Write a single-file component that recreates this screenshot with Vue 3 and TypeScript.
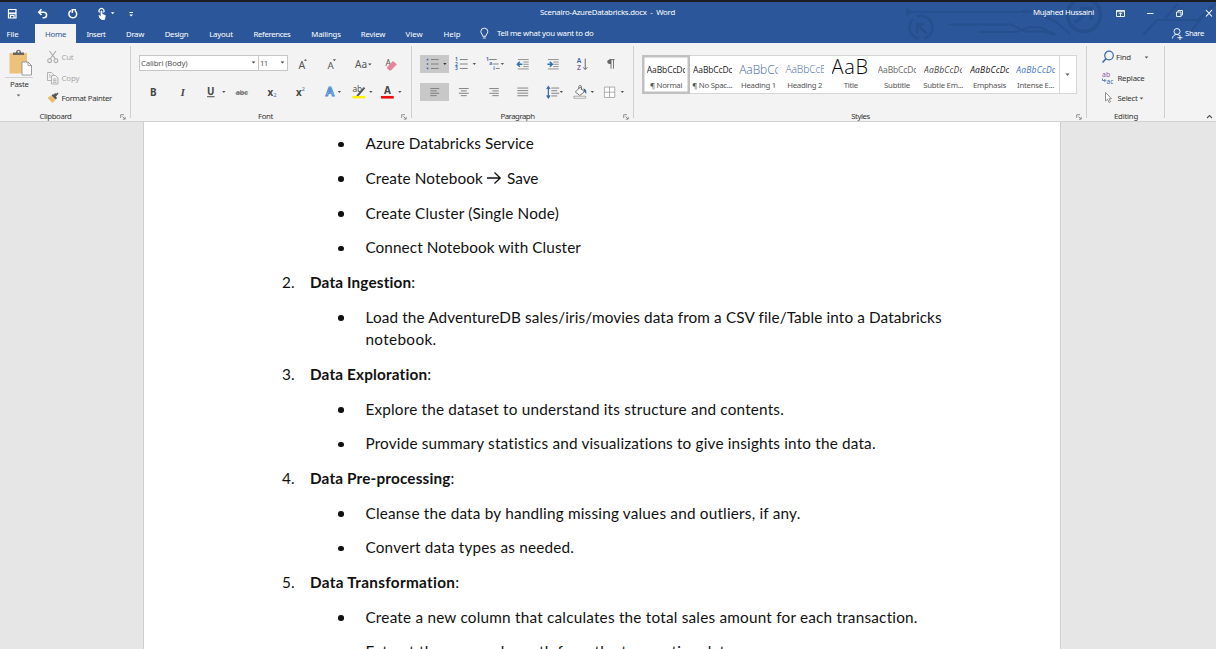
<script setup lang="ts">
interface Tab { label: string; cell: number; text: number }
interface StyleItem { preview: string; label: string; kind: string; pw: number; lw: number }
interface Para { kind: 'item' | 'head'; num?: string; lines: { text: string; w: number }[] }

// Spreads the letters of a label so that it takes the given width.
const vFit = {
  mounted(el: HTMLElement, binding: { value: number }) {
    const natural = el.getBoundingClientRect().width
    const count = (el.textContent ?? '').trim().length
    if (count > 0) el.style.letterSpacing = `${(binding.value - natural) / count}px`
  },
}

const tabs: Tab[] = [
  { label: 'Insert', cell: 40, text: 19 },
  { label: 'Draw', cell: 38, text: 18 },
  { label: 'Design', cell: 45, text: 23.5 },
  { label: 'Layout', cell: 44, text: 23.5 },
  { label: 'References', cell: 58, text: 37 },
  { label: 'Mailings', cell: 50, text: 29.5 },
  { label: 'Review', cell: 44, text: 24.5 },
  { label: 'View', cell: 38, text: 17 },
  { label: 'Help', cell: 38, text: 17 },
]

const styles: StyleItem[] = [
  { preview: 'AaBbCcDc', label: '¶ Normal', kind: 'normal', pw: 39.5, lw: 32 },
  { preview: 'AaBbCcDc', label: '¶ No Spac...', kind: 'normal', pw: 39.5, lw: 40 },
  { preview: 'AaBbCc', label: 'Heading 1', kind: 'h1', pw: 41, lw: 35 },
  { preview: 'AaBbCcE', label: 'Heading 2', kind: 'h2', pw: 40.5, lw: 35 },
  { preview: 'AaB', label: 'Title', kind: 'title', pw: 37, lw: 14 },
  { preview: 'AaBbCcDc', label: 'Subtitle', kind: 'sub', pw: 39.5, lw: 26 },
  { preview: 'AaBbCcDc', label: 'Subtle Em...', kind: 'subtle', pw: 39.5, lw: 40 },
  { preview: 'AaBbCcDc', label: 'Emphasis', kind: 'emph', pw: 39.5, lw: 33 },
  { preview: 'AaBbCcDc', label: 'Intense E...', kind: 'intense', pw: 39.5, lw: 37 },
]

const item = (...lines: [string, number][]): Para => ({ kind: 'item', lines: lines.map(([text, w]) => ({ text, w })) })
const head = (num: string, text: string, w: number): Para => ({ kind: 'head', num, lines: [{ text, w }] })

const paras: Para[] = [
  item(['Azure Databricks Service', 168.5]),
  { kind: 'item', lines: [{ text: 'Create Notebook', w: 117.5 }, { text: 'Save', w: 31.5 }] },
  item(['Create Cluster (Single Node)', 193.5]),
  item(['Connect Notebook with Cluster', 215.5]),
  head('2.', 'Data Ingestion', 101.5),
  item(['Load the AdventureDB sales/iris/movies data from a CSV file/Table into a Databricks', 576], ['notebook.', 71]),
  head('3.', 'Data Exploration', 117.5),
  item(['Explore the dataset to understand its structure and contents.', 418.5]),
  item(['Provide summary statistics and visualizations to give insights into the data.', 511]),
  head('4.', 'Data Pre-processing', 140.5),
  item(['Cleanse the data by handling missing values and outliers, if any.', 435]),
  item(['Convert data types as needed.', 208.5]),
  head('5.', 'Data Transformation', 145.5),
  item(['Create a new column that calculates the total sales amount for each transaction.', 552.5]),
  item(['Extract the year and month from the transaction date.', 372]),
]
</script>

<template>
  <div class="app">
    <header class="top">
      <svg class="circuit" width="320" height="41" viewBox="896 2 320 41" fill="none" stroke="#244a87" stroke-width="2">
        <path d="M908 12h120M907 9l5 3-5 3z" stroke-width="1.500" />
        <path d="M949 24.500h62l14 7h20l8 3M978 32h38l14-5 12 1 14 7M1022 11l14 1 20 10 14 12" />
        <circle cx="921" cy="27.500" r="11.500" stroke-width="2.500" stroke-dasharray="25 5" stroke-dashoffset="10" />
        <path d="M917 34v-10h8M918 25l9 9" stroke-width="2.500" />
        <circle cx="1084" cy="15" r="16.500" stroke-width="3.500" />
        <path d="M1080 8.500h11v11M1090 9.500l-15 13" stroke-width="3.500" />
        <path d="M1143 35l14-15h41l18-17M1165 19l12-15M1188 35l24-30" />
      </svg>
      <div class="titlebar">
        <svg class="quick" width="150" height="20" viewBox="0 0 150 20" fill="none" stroke="#fff" stroke-width="1.200">
          <path d="M8.500 6.500h7.500v8.500h-7.500z" /><path d="M8.500 10.300h7.500" stroke-width="1.700" /><path d="M10.500 15v-2.700h3.500v2.700" />
          <path d="M41.500 6.300l-2.800 2.900 2.800 2.800M39 9.200h4.800a2.800 2.800 0 0 1 0 5.600h-1.200" stroke-width="1.500" />
          <path d="M70.800 7.600a3.900 3.900 0 1 0 4.300.2M72.300 10V6.800h3.700" stroke-width="1.500" />
          <path d="M99.500 9.500a2.500 2.500 0 1 1 4 0" />
          <path d="M101 14.500l-2-2M101 8v6l-1.800-1.400.6 2.400 2 1.500h2.700l.8-4-3.300-1.200V8z" fill="#fff" stroke-width=".8" />
          <path d="M110.900 9.200h3.600l-1.800 2zM129.300 11.400h3.800l-1.900 2z" fill="#fff" stroke="none" /><path d="M129.500 9.500h3.500" stroke-width=".9" />
        </svg>
        <div class="doctitle"><span v-fit="135">Scenairo-AzureDatabricks.docx &nbsp;-&nbsp; Word</span></div>
        <div class="user"><span v-fit="61">Mujahed Hussaini</span></div>
        <svg class="winctl" width="104" height="20" viewBox="0 0 104 20" fill="none" stroke="#fff" stroke-width=".9">
          <path d="M4.500 7.500h8v6h-8zM4.500 8.700h8M8.500 13v-3M7 11.200l1.500-1.500 1.500 1.500" />
          <path d="M35 10.500h6.500" />
          <path d="M64.500 9h4.500v4.500h-4.500zM66 9v-1.500h4.500v4.500h-1.500" />
          <path d="M94 7l6 6.500M100 7l-6 6.500" stroke-width="1.100" />
        </svg>
      </div>
      <nav class="tabs">
        <span class="tab file"><span v-fit="12">File</span></span>
        <span class="tab home"><span v-fit="21">Home</span></span>
        <span v-for="t in tabs" :key="t.label" class="tab" :style="{ width: t.cell + 'px' }"><span v-fit="t.text">{{ t.label }}</span></span>
        <svg class="bulb" width="26" height="19" viewBox="0 0 26 19" fill="none" stroke="#fff" stroke-width=".9">
          <path d="M11.800 12.300c0-2-2-2.500-2-4.700a3.500 3.500 0 0 1 7 0c0 2.200-2 2.700-2 4.700zM11.800 14h3" />
        </svg>
        <span class="tell" v-fit="96.5">Tell me what you want to do</span>
        <span class="share">
          <svg width="13" height="13" viewBox="0 0 13 13" fill="none" stroke="#fff" stroke-width=".9"><circle cx="6" cy="4.500" r="3" /><path d="M1.500 11.500c0-2.500 2-4 4-4s2.800.6 3.300 1.500M6.500 10.700h5M9 8.200v5" /></svg>
          <span v-fit="19">Share</span>
        </span>
      </nav>
    </header>

    <section class="ribbon">
      <div class="group clipboard">
        <div class="main">
          <div class="paste">
            <svg width="30" height="27" viewBox="0 0 30 27">
              <path d="M5.500 4h17.500v20.500h-17.500z" fill="#ecc27b" />
              <path d="M9 6V3.400h3C12-.2 17-.2 17 3.400h3V6z" fill="#666" /><circle cx="14.500" cy="2.800" r="1" fill="#f3f3f3" />
              <path d="M18 13h6l3.500 3.500v9.500h-9.500z" fill="#fff" stroke="#929292" stroke-width=".9" /><path d="M24 13v3.500h3.500" fill="none" stroke="#929292" stroke-width=".8" />
            </svg>
            <i class="rule"></i>
            <span v-fit="18.500">Paste</span>
            <svg class="caret" width="5" height="3" viewBox="0 0 5 3"><path d="M.7.5h3.600L2.500 2.600z" fill="#666" /></svg>
          </div>
          <div class="clipcol">
            <div class="cliprow dim">
              <svg width="14" height="14" viewBox="0 0 14 14" fill="none" stroke="#a9a9a9" stroke-width="1.100"><path d="M3.500 1l6 8M10 1l-6 8" /><circle cx="3.600" cy="10.700" r="1.900" /><circle cx="9.900" cy="10.700" r="1.900" /></svg>
              <span v-fit="12">Cut</span>
            </div>
            <div class="cliprow dim">
              <svg width="14" height="14" viewBox="0 0 14 14" fill="#f3f3f3" stroke="#aaa" stroke-width=".9"><path d="M1.500 1.500h4l2 2v6h-6z" /><path d="M5.500 4.500h4l2.500 2.500v6H5.500zM7 8h3.500M7 9.700h3.500M7 11.300h3.500M3 4h1.500M3 6h1.500" /></svg>
              <span v-fit="18">Copy</span>
            </div>
            <div class="cliprow">
              <svg width="14" height="14" viewBox="0 0 14 14"><path d="M1.500 7L5 4.500l4.500 4.500L6.500 12z" fill="#ecb96a" /><path d="M5.500 4.500l1.700-1.500 4 4-1.700 1.600zM8 3.500l1-1.500 1.200.8L11.500 1.500l1 1-2 2.500-1 .9z" fill="#555" /></svg>
              <span v-fit="50.500">Format Painter</span>
            </div>
          </div>
        </div>
        <div class="caption"><span v-fit="32">Clipboard</span><svg class="launch" width="6" height="6" viewBox="0 0 6 6" fill="none" stroke="#777" stroke-width=".8"><path d="M.7 4V.7H4M2.500 2.500l2.300 2.300M5.200 2.800v2.400H2.800" /></svg></div>
      </div>

      <div class="group font">
        <div class="rowline">
          <div class="combo name"><span v-fit="46.500">Calibri (Body)</span><svg width="5" height="3" viewBox="0 0 5 3"><path d="M.6.4h3.800L2.500 2.600z" fill="#444" /></svg></div>
          <div class="combo size"><span v-fit="7.500">11</span><svg width="5" height="3" viewBox="0 0 5 3"><path d="M.6.4h3.800L2.500 2.600z" fill="#444" /></svg></div>
          <svg class="fontextra" width="119" height="18" viewBox="287.500 55 119 18" fill="#555">
            <text x="298" y="68.500" class="g" font-size="10.500">A</text><path d="M303.300 60.800l1.600-1.900 1.600 1.900z" />
            <text x="327" y="68.500" class="g" font-size="9.800">A</text><path d="M332.300 59.300l1.600 1.900 1.600-1.900z" />
            <text x="354.500" y="67.500" class="g" font-size="10">Aa</text><path d="M367.500 63.500h3.600l-1.800 2z" />
            <text x="385" y="65.500" class="g" font-size="8.500">A</text><path d="M386.500 67.200l6-6.200 3.800 3.200-5.800 6.300h-1.500l-2.500-2z" fill="#e8819b" />
          </svg>
        </div>
        <div class="cells">
          <svg viewBox="0 0 30 18"><text x="14.500" y="13" class="b">B</text></svg>
          <svg viewBox="0 0 30 18"><text x="15" y="13" class="it">I</text></svg>
          <svg viewBox="0 0 30 18"><text x="13" y="12.300" class="b u">U</text><path d="M24.500 8h3.400l-1.700 2z" fill="#555" /></svg>
          <svg viewBox="0 0 30 18"><text x="15" y="12.500" class="abc">abc</text><path d="M8.700 10h12.700" stroke="#555" stroke-width=".8" /></svg>
          <svg viewBox="0 0 30 18"><text x="13.600" y="13" class="b">x</text><text x="16.600" y="14.500" class="g blue" font-size="5.500">2</text></svg>
          <svg viewBox="0 0 30 18"><text x="13" y="13" class="b">x</text><text x="16" y="8.500" class="g blue" font-size="5.500">2</text></svg>
          <svg viewBox="0 0 30 18"><text x="14" y="13.500" class="halo">A</text><path d="M22 8h3.400l-1.700 2z" fill="#555" /></svg>
          <svg viewBox="0 0 30 18"><text x="6.500" y="8.800" class="g" font-size="8.500">ab</text><path d="M11 12l7-8 1.500 1.300-6.500 7.500-2.500.8z" fill="#555" /><path d="M6.500 13h13v2.500h-13z" fill="#fff200" /><path d="M23.500 8h3.400l-1.700 2z" fill="#555" /></svg>
          <svg viewBox="0 0 30 18"><text x="12.500" y="11.500" class="b">A</text><path d="M6 13h13v2.700H6z" fill="#ee1010" /><path d="M23.500 8h3.400l-1.700 2z" fill="#555" /></svg>
        </div>
        <div class="caption"><span v-fit="15">Font</span><svg class="launch" width="6" height="6" viewBox="0 0 6 6" fill="none" stroke="#777" stroke-width=".8"><path d="M.7 4V.7H4M2.500 2.500l2.300 2.300M5.200 2.800v2.400H2.800" /></svg></div>
      </div>

      <div class="group paragraph">
        <div class="cells first">
          <svg class="on" viewBox="0 0 30 18"><path d="M11 4.500h8M11 9h8M11 13.500h8" stroke="#777" stroke-width=".9" /><path d="M6.800 3.800h1.600v1.600H6.800zM6.800 8.200h1.600v1.600H6.800zM6.800 12.600h1.600v1.600H6.800z" fill="#3d6fb0" /><path d="M23.500 8h3.400l-1.700 2z" fill="#333" /></svg>
          <svg viewBox="0 0 30 18"><path d="M11 4.500h8M11 9h8M11 13.500h8" stroke="#777" stroke-width=".9" /><text x="6" y="6.300" class="num">1</text><text x="6" y="10.900" class="num">2</text><text x="6" y="15.500" class="num">3</text><path d="M24 8h3.400l-1.700 2z" fill="#555" /></svg>
          <svg viewBox="0 0 30 18"><path d="M10 4.500h8M14 9h6M17 13.500h4" stroke="#777" stroke-width=".9" /><text x="7" y="6" class="num">1</text><text x="10.500" y="10.500" class="num">a</text><text x="14.500" y="15" class="num">i</text><path d="M22 8h3.400l-1.700 2z" fill="#555" /></svg>
          <svg viewBox="0 0 30 18"><path d="M10 4.500h11M15.500 7h5.500M15.500 9.300h5.500M15.500 11.600h5.500M10 14h11" stroke="#888" stroke-width=".9" /><path d="M14.500 9.300H9.800M12 6.800L9.500 9.300l2.500 2.500" stroke="#2f6fac" fill="none" stroke-width="1.500" /></svg>
          <svg viewBox="0 0 30 18"><path d="M10 4.500h11M15.500 7h5.500M15.500 9.300h5.500M15.500 11.600h5.500M10 14h11" stroke="#888" stroke-width=".9" /><path d="M9.500 9.300h5M12 6.800l2.500 2.500L12 11.800" stroke="#2f6fac" fill="none" stroke-width="1.500" /></svg>
          <svg viewBox="0 0 30 18"><text x="10" y="8.400" class="sort">A</text><text x="10.200" y="15" class="sort z">Z</text><path d="M18.500 3.500v11M16.300 12.300l2.200 2.300 2.200-2.300" stroke="#666" fill="none" /></svg>
          <svg viewBox="0 0 30 18"><path d="M14.200 4.600h-1.700a2.100 2.100 0 0 0 0 4.300h1.700z" fill="#666" /><path d="M14.200 4v9.800M16.700 4v9.800M12.500 4.500h5.300" stroke="#666" stroke-width=".9" /></svg>
        </div>
        <div class="cells">
          <svg class="on" viewBox="0 0 30 18"><path d="M10.500 5.500h9M10.500 7.900h6.500M10.500 10.300h9M10.500 12.700h6.500" stroke="#777" stroke-width=".9" /></svg>
          <svg viewBox="0 0 30 18"><path d="M10 5.500h10M12 7.900h6M10 10.300h10M12 12.700h6" stroke="#777" stroke-width=".9" /></svg>
          <svg viewBox="0 0 30 18"><path d="M10.500 5.500h9.500M13.500 7.900h6.500M10.500 10.300h9.500M13.500 12.700h6.500" stroke="#777" stroke-width=".9" /></svg>
          <svg viewBox="0 0 30 18"><path d="M9.500 5h11M9.500 7.600h11M9.500 10.200h11M9.500 12.800h11" stroke="#777" stroke-width=".9" /></svg>
          <svg viewBox="0 0 30 18"><path d="M13.500 5h8M13.500 7.700h6M13.500 10.300h8M13.500 13h6" stroke="#777" stroke-width=".9" /><path d="M10.500 5v8.500M8.800 6l1.700-2.500L12.200 6M8.800 12.500l1.700 2.500 1.700-2.500" stroke="#3465a4" fill="none" stroke-width="1.200" /><path d="M22 8h3.400l-1.700 2z" fill="#555" /></svg>
          <svg viewBox="0 0 30 18"><path d="M8.500 9l5-5 4 5-4.500 3.500zM12 6V3.700a1.300 1.300 0 0 1 2.600 0V7" stroke="#666" fill="#fff" stroke-width=".9" /><path d="M16.500 5.500c2.500.5 3.500 2 3 5.500l-2-2.500z" fill="#3465a4" /><path d="M7 13.300h12v2H7z" fill="#fff" stroke="#888" stroke-width=".7" /><path d="M24 8h3.400l-1.700 2z" fill="#555" /></svg>
          <svg viewBox="0 0 30 18"><path d="M7.500 4h10.500v10.500H7.500zM12.700 4v10.500M7.500 9.200H18" stroke="#999" fill="#fff" stroke-width=".8" /><path d="M24 8h3.400l-1.700 2z" fill="#555" /></svg>
        </div>
        <div class="caption"><span v-fit="34">Paragraph</span><svg class="launch" width="6" height="6" viewBox="0 0 6 6" fill="none" stroke="#777" stroke-width=".8"><path d="M.7 4V.7H4M2.500 2.500l2.300 2.300M5.200 2.800v2.400H2.800" /></svg></div>
      </div>

      <div class="group stylesgroup">
        <div class="gallery">
          <div v-for="(s, i) in styles" :key="s.label" class="style" :class="{ selected: i === 0 }">
            <div class="preview" :class="s.kind"><span v-fit="s.pw">{{ s.preview }}</span></div>
            <span class="slabel" v-fit="s.lw">{{ s.label }}</span>
          </div>
          <div class="more"><svg width="5" height="3" viewBox="0 0 5 3"><path d="M.4.4h4.200L2.500 2.700z" fill="#555" /></svg></div>
        </div>
        <div class="caption"><span v-fit="18.500">Styles</span><svg class="launch" width="6" height="6" viewBox="0 0 6 6" fill="none" stroke="#777" stroke-width=".8"><path d="M.7 4V.7H4M2.500 2.500l2.300 2.300M5.200 2.800v2.400H2.800" /></svg></div>
      </div>

      <div class="group editing">
        <div class="editrow find">
          <svg width="14" height="14" viewBox="0 0 14 14" fill="none" stroke="#3b6ba8" stroke-width="1.200"><circle cx="8" cy="5.500" r="4.300" /><path d="M5.200 8.500L1.500 12.500" stroke-width="1.600" /></svg>
          <span v-fit="15">Find</span><svg class="fc" width="5" height="3" viewBox="0 0 5 3"><path d="M.7.4h3.600L2.500 2.500z" fill="#555" /></svg>
        </div>
        <div class="editrow">
          <svg class="rep" width="14" height="14" viewBox="0 0 14 14"><text x="1" y="6.300" font-size="7" class="g purple">ab</text><text x="5.500" y="12.500" font-size="6.500" class="g blue">ac</text><path d="M1.500 7.500v2h3M3.300 8l1.500 1.500L3.300 11" fill="none" stroke="#3b6ba8" stroke-width=".8" /></svg>
          <span v-fit="27">Replace</span>
        </div>
        <div class="editrow">
          <svg width="14" height="14" viewBox="0 0 14 14" fill="#fff" stroke="#777" stroke-width=".8"><path d="M4.500 1.500v8.500l2-1.800 1.500 3.300 1.500-.7L8 7.700h2.500z" /></svg>
          <span v-fit="20">Select</span><svg class="sc" width="5" height="3" viewBox="0 0 5 3"><path d="M.7.4h3.600L2.500 2.500z" fill="#555" /></svg>
        </div>
        <div class="caption"><span v-fit="24">Editing</span></div>
      </div>
      <div class="tail"><svg width="7" height="5" viewBox="0 0 7 5" fill="none" stroke="#555" stroke-width="1.100"><path d="M1 4l2.500-2.500L6 4" /></svg></div>
    </section>

    <main class="workspace">
      <article class="page">
        <div v-for="(p, i) in paras" :key="i" class="para" :class="p.kind">
          <template v-if="p.kind === 'head'">
            <span class="number"><span v-fit="12.500">{{ p.num }}</span></span>
            <p><b v-fit="p.lines[0].w">{{ p.lines[0].text }}</b>:</p>
          </template>
          <template v-else-if="i === 1">
            <i class="dot"></i>
            <p class="arrowline"><span v-fit="p.lines[0].w">{{ p.lines[0].text }}</span>
              <svg width="15" height="13" viewBox="0 0 15 13" fill="none" stroke="#111" stroke-width="1.300"><path d="M0 6h13M7.500.5l5.700 5.500-5.700 5.500" /></svg>
              <span v-fit="p.lines[1].w">{{ p.lines[1].text }}</span></p>
          </template>
          <template v-else>
            <i class="dot"></i>
            <p><span v-for="l in p.lines" :key="l.text" class="line"><span v-fit="l.w">{{ l.text }}</span></span></p>
          </template>
        </div>
      </article>
    </main>
  </div>
</template>

<style>
body { margin: 0; overflow: hidden; }
</style>

<style scoped>
* { box-sizing: border-box; }
.app { width: 1216px; height: 649px; overflow: hidden; display: flex; flex-direction: column; background: #e6e6e6; font: 7.8px/10px "Noto Sans", "Open Sans", sans-serif; color: #333; }
span, b { white-space: pre; }
svg { flex: none; display: block; }
.top { position: relative; height: 43px; flex: none; background: #2b579a; border-top: 2px solid #1b1d22; color: #fff; }
.circuit { position: absolute; right: 0; top: 0; opacity: .6; }
.titlebar { position: relative; height: 22px; display: flex; align-items: center; }
.quick { margin-right: 390px; }
.doctitle { width: 135px; margin-top: -2px; }
.user { margin-left: 358px; width: 61px; margin-top: -2px; }
.winctl { margin: -1px 0 0 18px; }
.tabs { position: relative; height: 19px; display: flex; align-items: center; }
.tab { height: 19px; flex: none; display: flex; align-items: center; justify-content: center; }
.file { width: 25px; margin-right: 10px; }
.home { width: 41px; background: #f3f3f3; color: #2b579a; }
.tell { margin-top: -1px; }
.share { margin: -1px 0 0 auto; padding-right: 12px; display: flex; gap: 1px; align-items: center; }
.ribbon { height: 79px; flex: none; display: flex; background: #f3f3f3; border-bottom: 1px solid #d2d2d2; }
.group { position: relative; height: 75px; flex: none; display: flex; flex-direction: column; }
.group::after { content: ""; position: absolute; right: 0; top: 3px; width: 1px; height: 72px; background: #d0d0d0; }
.caption { position: absolute; left: 0; right: 0; bottom: -3px; height: 10px; display: flex; justify-content: center; align-items: center; }
.launch { position: absolute; right: 5.500px; top: 3px; }
.clipboard { width: 131px; }
.clipboard .caption { right: 20px; }
.clipboard .launch { right: -14.500px; }
.main { display: flex; padding-top: 6px; }
.paste { width: 46px; padding-left: 4px; display: flex; flex-direction: column; }
.paste > span { margin: 0 0 0 6px; width: 20px; }
.rule { height: 1px; width: 28px; margin: 1px 0 1px 1px; background: #d2d2d2; }
.caret { margin: 5px 0 0 12px; }
.clipcol { display: flex; flex-direction: column; gap: 6.500px; padding-top: 1px; }
.cliprow { display: flex; align-items: center; height: 14px; gap: 1.500px; }
.dim { color: #a6a6a6; }
.font { width: 281px; padding: 11.500px 0 0 7.500px; }
.rowline { display: flex; height: 17px; }
.combo { height: 16px; display: flex; justify-content: space-between; align-items: center; background: #fff; border: 1px solid #c6c6c6; color: #555; padding: 0 2px 0 1.500px; }
.name { width: 120px; }
.size { width: 29px; border-left: 0; }
.font .cells { margin-top: 11px; }
.cells { display: flex; height: 18px; }
.cells svg { width: 29.600px; height: 18px; }
.cells .on { background: #c8c8c8; }
.paragraph { width: 222px; padding: 11.500px 0 0 7.500px; }
.paragraph .first { margin-bottom: 10px; }
.paragraph .caption { right: 11px; }
.paragraph .launch { right: -5.500px; }
.font .caption { right: 12px; }
.font .launch { right: -7px; }
text { font-family: "Noto Sans", sans-serif; fill: #555; }
.b { font-size: 10px; font-weight: 700; text-anchor: middle; fill: #444; }
.u { text-decoration: underline; }
.it { font: italic 700 10.500px "Liberation Serif", serif; text-anchor: middle; fill: #444; }
.abc { font-size: 7.500px; text-anchor: middle; }
.blue { fill: #3b6ba8; }
.purple { fill: #8a5aa5; }
.halo { font-size: 12.500px; font-weight: 600; text-anchor: middle; fill: #fff; stroke: #4a8bcb; stroke-width: 1.100px; }
.num { font-size: 5px; font-weight: 700; fill: #3d6fb0; }
.sort { font-size: 6.800px; fill: #3465a4; font-weight: 600; }
.z { fill: #7c5aa0; }
.stylesgroup { width: 453px; padding: 12px 0 0 8px; }
.gallery { width: 435px; height: 39px; display: flex; background: #fff; border: 1px solid #d6d6d6; }
.style { width: 46.200px; height: 37px; flex: none; display: flex; flex-direction: column; align-items: center; color: #555; }
.style.selected { box-shadow: 0 0 0 1px #c0c0c0, inset 0 0 0 1.500px #c0c0c0; }
.preview { width: 38.500px; height: 25px; overflow: hidden; line-height: 27px; font-family: "Open Sans", sans-serif; font-size: 8.500px; color: #222; }
.slabel { line-height: 8px; }
.h1 { font-size: 12px; color: #4468a8; }
.h2 { font-size: 10.300px; color: #4468a8; }
.h1, .h2 { font-weight: 300; }
.title { font-size: 20px; font-weight: 300; line-height: 22px; color: #000; }
.sub { color: #666; }
.subtle { font-style: italic; color: #444; }
.emph { font-style: italic; color: #111; }
.intense { font-style: italic; color: #4472c4; }
.more { flex: 1; margin-left: auto; border-left: 1px solid #d6d6d6; display: flex; align-items: center; justify-content: center; }
.editing { width: 78px; padding: 7px 0 0 14px; }
.editrow { height: 14px; margin-bottom: 6.500px; display: flex; align-items: center; gap: 2.500px; }
.find { gap: 1px; }
.rep { overflow: visible; }
.fc { margin-left: 12px; }
.sc { margin-left: -1px; }
.tail { flex: 1; display: flex; justify-content: flex-end; align-items: flex-end; padding: 0 3px 2px 0; }
.workspace { flex: 1; min-height: 0; display: flex; }
.page { margin-left: 143px; width: 918px; height: 527px; overflow: hidden; background: #fff; border: solid #cfcfcf; border-width: 0 1px; padding-top: 10.200px; font: 15.300px/22.670px Lato, sans-serif; color: #111; }
.para { display: flex; margin-bottom: 12px; }
.para p { margin: 0; }
.head { padding-left: 138px; }
.number { width: 28px; }
.item { padding-left: 194px; }
.dot { width: 5.600px; height: 5.600px; border-radius: 50%; background: #111; margin: 9.500px 21.700px 0 .200px; flex: none; }
.line { display: block; }
.arrowline { display: flex; align-items: center; gap: 4.500px; }
</style>
